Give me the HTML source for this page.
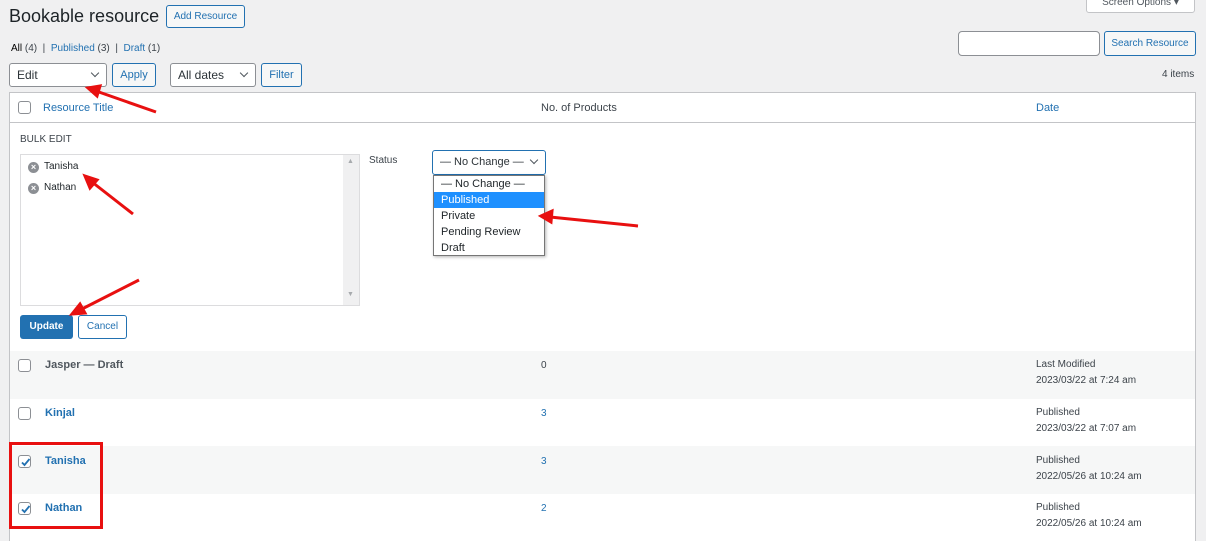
<!DOCTYPE html>
<html><head><style>
*{box-sizing:border-box}
html,body{margin:0;width:1206px;height:541px;overflow:hidden}
body{background:#f0f0f1;font-family:"Liberation Sans",sans-serif;font-size:12px;color:#3c434a;position:relative}
.a{position:absolute}
.btn{position:absolute;border:1px solid #2271b1;border-radius:3px;color:#2271b1;background:#f6f7f7;font-size:11px;text-align:center}
.sel{position:absolute;border:1px solid #8c8f94;border-radius:3px;background:#fff;font-size:12px;padding-left:7px;color:#2c3338}
.chev{position:absolute;right:8px;top:6px;width:6px;height:6px;border-right:1.5px solid #50575e;border-bottom:1.5px solid #50575e;transform:rotate(45deg)}
.cb{position:absolute;width:13px;height:13px;border:1px solid #8c8f94;border-radius:3px;background:#fff}
.cb svg{position:absolute;left:1px;top:1px}
.link{color:#2271b1}
.row{position:absolute;left:10px;width:1185px;height:48px}
</style></head><body>
<div class="a" style="left:9px;top:6px;font-size:18px;color:#1d2327">Bookable resource</div>
<div class="btn" style="left:166px;top:5px;width:79px;height:23px;line-height:21px;font-size:10px">Add Resource</div>
<div class="btn" style="left:1086px;top:-12px;width:109px;height:25px;border-color:#c3c4c7;background:#fff;color:#50575e;line-height:28px;font-size:10px">Screen Options ▾</div>
<div class="a" style="left:11px;top:43px;font-size:10px"><span style="color:#000">All</span> (4) &nbsp;|&nbsp; <span class="link">Published</span> (3) &nbsp;|&nbsp; <span class="link">Draft</span> (1)</div>
<div class="sel" style="left:958px;top:31px;width:142px;height:25px;border-radius:4px"></div>
<div class="btn" style="left:1104px;top:31px;width:92px;height:25px;line-height:23px;font-size:10px">Search Resource</div>
<div class="sel" style="left:9px;top:63px;width:98px;height:24px;line-height:22px">Edit<span class="chev"></span></div>
<div class="btn" style="left:112px;top:63px;width:44px;height:24px;line-height:22px">Apply</div>
<div class="sel" style="left:170px;top:63px;width:86px;height:24px;line-height:22px">All dates<span class="chev"></span></div>
<div class="btn" style="left:261px;top:63px;width:41px;height:24px;line-height:22px">Filter</div>
<div class="a" style="left:1162px;top:69px;font-size:10px">4 items</div>
<div class="a" style="left:9px;top:92px;width:1187px;height:470px;border:1px solid #c3c4c7;background:#fff"></div>
<div class="a" style="left:10px;top:122px;width:1185px;height:1px;background:#c3c4c7"></div>
<div class="cb" style="left:18px;top:101px"></div>
<div class="a link" style="left:43px;top:102px;font-size:11px">Resource Title</div>
<div class="a" style="left:541px;top:102px;font-size:11px">No. of Products</div>
<div class="a link" style="left:1036px;top:102px;font-size:11px">Date</div>
<div class="a" style="left:20px;top:134px;font-size:10px;color:#3c434a">BULK EDIT</div>
<div class="a" style="left:20px;top:154px;width:340px;height:152px;border:1px solid #dcdcde"></div>
<div class="a" style="left:343px;top:155px;width:16px;height:150px;background:#f0f0f1"></div>
<div class="a" style="left:347px;top:158px;font-size:7px;color:#a7aaad">▲</div>
<div class="a" style="left:347px;top:291px;font-size:7px;color:#a7aaad">▼</div>
<div class="a" style="left:28px;top:161px;font-size:10px;color:#1d2327"><span style="display:inline-block;vertical-align:-1px;width:11px;height:11px;border-radius:50%;background:#8c8f94;color:#fff;font-size:9px;line-height:11px;text-align:center;font-weight:bold;margin-right:5px">×</span>Tanisha</div>
<div class="a" style="left:28px;top:182px;font-size:10px;color:#1d2327"><span style="display:inline-block;vertical-align:-1px;width:11px;height:11px;border-radius:50%;background:#8c8f94;color:#fff;font-size:9px;line-height:11px;text-align:center;font-weight:bold;margin-right:5px">×</span>Nathan</div>
<div class="a" style="left:369px;top:155px;font-size:10px">Status</div>
<div class="sel" style="left:432px;top:150px;width:114px;height:25px;line-height:23px;border-color:#2271b1;font-size:11px">— No Change —<span class="chev"></span></div>
<div class="a" style="left:433px;top:175px;width:112px;height:81px;border:1px solid #767676;background:#fff;font-size:11px;line-height:16px;color:#1d2327;box-shadow:1px 1px 3px rgba(0,0,0,.3)">
<div style="padding-left:7px">— No Change —</div>
<div style="padding-left:7px;background:#1e90ff;color:#fff">Published</div>
<div style="padding-left:7px">Private</div>
<div style="padding-left:7px">Pending Review</div>
<div style="padding-left:7px">Draft</div></div>
<div class="a" style="left:20px;top:315px;width:53px;height:24px;background:#2271b1;border-radius:3px;color:#fff;font-size:10px;font-weight:bold;text-align:center;line-height:24px">Update</div>
<div class="btn" style="left:78px;top:315px;width:49px;height:24px;line-height:22px;background:#fff;font-size:10px">Cancel</div>
<div class="row" style="top:351px;background:#f6f7f7"></div>
<div class="row" style="top:446px;background:#f6f7f7"></div>
<div class="cb" style="left:18px;top:359px"></div><div class="a" style="left:45px;top:359px;color:#50575e;font-weight:bold;font-size:11px">Jasper — Draft</div><div class="a" style="left:541px;top:360px;font-size:10px">0</div>
<div class="a" style="left:1036px;top:357px;font-size:10px;line-height:16px">Last Modified<br>2023/03/22 at 7:24 am</div>
<div class="cb" style="left:18px;top:407px"></div><div class="a link" style="left:45px;top:407px;font-weight:bold;font-size:11px">Kinjal</div><div class="a link" style="left:541px;top:408px;font-size:10px">3</div>
<div class="a" style="left:1036px;top:405px;font-size:10px;line-height:16px">Published<br>2023/03/22 at 7:07 am</div>
<div class="cb" style="left:18px;top:455px"><svg width="11" height="11"><path d="M2 5.5 L4.5 8 L9.5 2" stroke="#2271b1" stroke-width="1.8" fill="none"/></svg></div><div class="a link" style="left:45px;top:455px;font-weight:bold;font-size:11px">Tanisha</div><div class="a link" style="left:541px;top:456px;font-size:10px">3</div>
<div class="a" style="left:1036px;top:453px;font-size:10px;line-height:16px">Published<br>2022/05/26 at 10:24 am</div>
<div class="cb" style="left:18px;top:502px"><svg width="11" height="11"><path d="M2 5.5 L4.5 8 L9.5 2" stroke="#2271b1" stroke-width="1.8" fill="none"/></svg></div><div class="a link" style="left:45px;top:502px;font-weight:bold;font-size:11px">Nathan</div><div class="a link" style="left:541px;top:503px;font-size:10px">2</div>
<div class="a" style="left:1036px;top:500px;font-size:10px;line-height:16px">Published<br>2022/05/26 at 10:24 am</div>
<div class="a" style="left:9px;top:442px;width:94px;height:87px;border:3px solid #e81010"></div>
<svg class="a" style="left:0;top:0" width="1206" height="541">
<g stroke="#e81010" stroke-width="3" fill="#e81010">
<line x1="156" y1="112" x2="96" y2="91"/><polygon points="88,88 100,86 97,96"/>
<line x1="133" y1="214" x2="92" y2="182"/><polygon points="85,176 97,180 90,188"/>
<line x1="139" y1="280" x2="80" y2="310"/><polygon points="72,314 80,304 85,313"/>
<line x1="638" y1="226" x2="550" y2="217"/><polygon points="541,216 552,211 551,222"/>
</g></svg>
</body></html>
